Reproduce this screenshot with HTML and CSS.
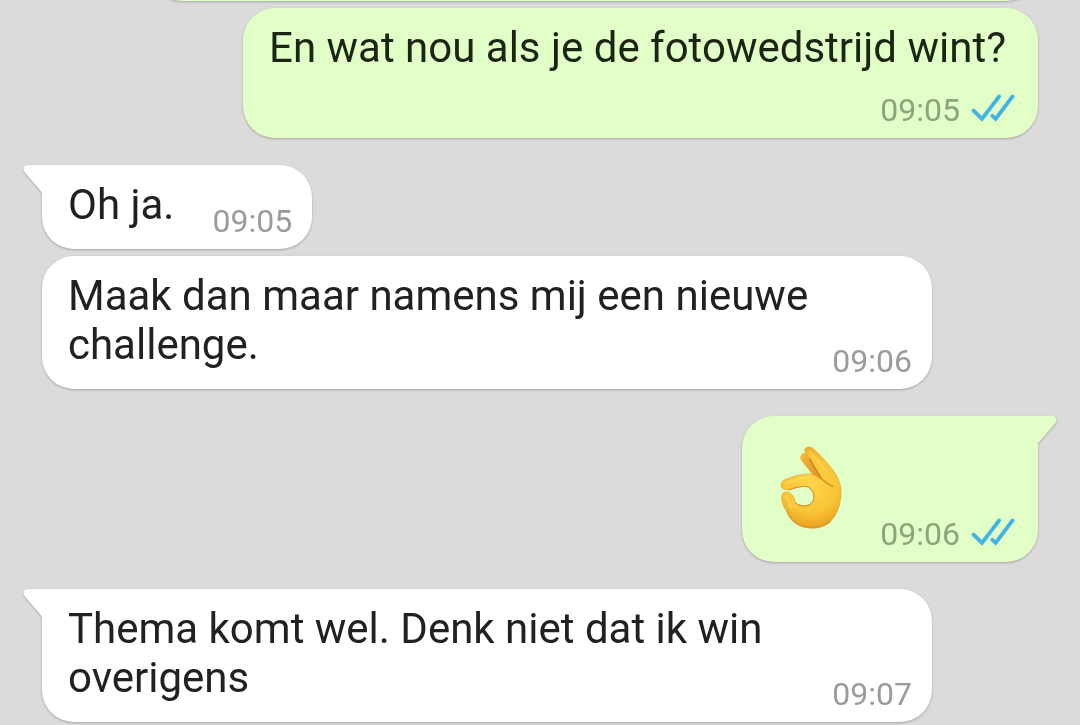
FILE: index.html
```
<!DOCTYPE html>
<html lang="nl">
  <head>
    <meta charset="utf-8">
    <title>Chat</title>
    <meta name="viewport" content="initial-scale=1, width=device-width">
    <link rel="stylesheet" href="styles.css">
  </head>
  <body>
    <svg class="defs" aria-hidden="true">
      <symbol id="ticks" viewBox="0 0 48 38">
        <path d="M3.6 19.6L12 27.8L29.2 5.4M22.4 24.8L25.6 27.8L42.6 5.4" fill="none" stroke="#3fb3e6" stroke-width="3.8" stroke-linecap="round"/>
      </symbol>
      <symbol id="tail" viewBox="0 0 20 28">
        <path d="M20 0H5C0.500 0-0.500 4.500 2 7.500L19 27.500H20Z"/>
      </symbol>
    </svg>
    <main class="chat">
      <div class="bubble out earlier"></div>
      <div class="bubble out stacked">
        <p class="text">En wat nou als je de fotowedstrijd wint?</p>
        <div class="meta"><time>09:05</time><svg class="ticks"><use href="#ticks"/></svg></div>
      </div>
      <div class="bubble in first">
        <svg class="tail"><use href="#tail"/></svg>
        <p class="text">Oh ja. <span class="meta"><time>09:05</time></span></p>
      </div>
      <div class="bubble in">
        <p class="text">Maak dan maar namens mij een nieuwe challenge. <span class="meta"><time>09:06</time></span></p>
      </div>
      <div class="bubble out first sticker">
        <svg class="tail"><use href="#tail"/></svg>
        <svg class="emoji" viewBox="-3 6 270 333" role="img" aria-label="OK">
          <defs>
            <radialGradient id="skin" gradientUnits="userSpaceOnUse" cx="125" cy="165" r="135">
              <stop offset="0" stop-color="#fed44a"/>
              <stop offset=".6" stop-color="#fac536"/>
              <stop offset="1" stop-color="#e89c20"/>
            </radialGradient>
            <linearGradient id="back" x1="0" y1="0" x2="1" y2="1">
              <stop offset="0" stop-color="#f5bb3a"/>
              <stop offset="1" stop-color="#d58a1c"/>
            </linearGradient>
          </defs>
          <path d="M110 68C97 69 91 80 96 91L119 119L134 138L165 156L178 145L133 78C128 70 120 67 110 68Z" fill="url(#back)"/>
          <path d="M108 58C112 49 126 49 133 57C148 70 167 89 182 108C203 132 216 158 216 188C215 222 206 253 185 273C162 296 123 298 96 288C76 278 61 261 53 243C44 231 38 217 38 203C38 190 46 184 56 187C71 190 78 207 80 219C92 230 113 232 125 224C137 214 138 191 128 180C122 172 115 169 108 169C92 169 74 175 58 179C46 181 36 176 37 164C38 153 47 148 59 145C80 138 102 131 122 132C139 134 150 143 159 148C151 129 136 110 126 91C118 78 105 69 108 58Z" fill="url(#skin)" stroke="#dfa02d" stroke-width="2"/>
          <path d="M122 88C135 112 150 133 158 147C168 156 180 164 192 169" fill="none" stroke="#c97c19" stroke-width="4" stroke-linecap="round" opacity=".8"/>
          <path d="M59 180C75 174 92 169 108 169C125 169 136 188 134 206C131 226 104 235 81 220" fill="none" stroke="#d48d22" stroke-width="3" stroke-linecap="round"/>
          <path d="M54 242C60 263 77 280 98 288C127 297 162 295 184 273" fill="none" stroke="#d98c1b" stroke-width="5" stroke-linecap="round" opacity=".7"/>
          <path d="M122 65L171 122M53 159C73 150 99 143 118 144M50 199C55 206 60 218 67 232" fill="none" stroke="#ffe061" stroke-width="8" stroke-linecap="round" opacity=".5"/>
        </svg>
        <div class="meta"><time>09:06</time><svg class="ticks"><use href="#ticks"/></svg></div>
      </div>
      <div class="bubble in first">
        <svg class="tail"><use href="#tail"/></svg>
        <p class="text">Thema komt wel. Denk niet dat ik win overigens <span class="meta"><time>09:07</time></span></p>
      </div>
    </main>
  </body>
</html>
```
FILE: styles.css
```
html, body {height:100%;}
body {background:#dbdbdb; margin:0; font-family:Roboto,sans-serif; font-size:42px; line-height:49px; color:#212121; overflow:hidden;}
.defs {position:absolute; width:0; height:0;}

/* newest message stays at the bottom, older ones run off the top */
.chat {box-sizing:border-box; height:100%; padding:0 42px 3px; display:flex; flex-direction:column; justify-content:flex-end; gap:7px;}

.bubble {position:relative; box-sizing:border-box; flex-shrink:0; max-width:calc(100% - 106px); padding:15px 20px 9px 26px; border-radius:32px; filter:drop-shadow(0 1px 1px rgba(0,0,0,.25));}
.in {align-self:flex-start; background:#fff; color:#212121; fill:#fff;}
.out {align-self:flex-end; background:#e1ffc7; color:#1c2414; fill:#e1ffc7;}
.first {margin-top:20px;}
.in.first {border-top-left-radius:0;}
.out.first {border-top-right-radius:0;}
.earlier {width:888px; height:130px;}

.text {margin:0; display:flow-root;}
.meta {float:right; display:flex; align-items:center; gap:10px; margin:22px 0 0 38px; font-size:32px; line-height:38px; color:#9b9b9b;}
.out .meta {color:#8da47a;}
.ticks {width:48px; height:38px;}

.stacked .text {padding-right:12px;}
.stacked .meta {float:none; justify-content:flex-end; margin:19px 0 0;}

.sticker {display:flex; align-items:flex-end; padding-top:16px;}
.sticker .meta {margin:0 0 0 22px;}
.emoji {width:90px; height:111px; margin-bottom:10px;}

.tail {position:absolute; top:0; width:20px; height:28px;}
.in .tail {left:-19px;}
.out .tail {right:-19px; transform:scaleX(-1);}
```
